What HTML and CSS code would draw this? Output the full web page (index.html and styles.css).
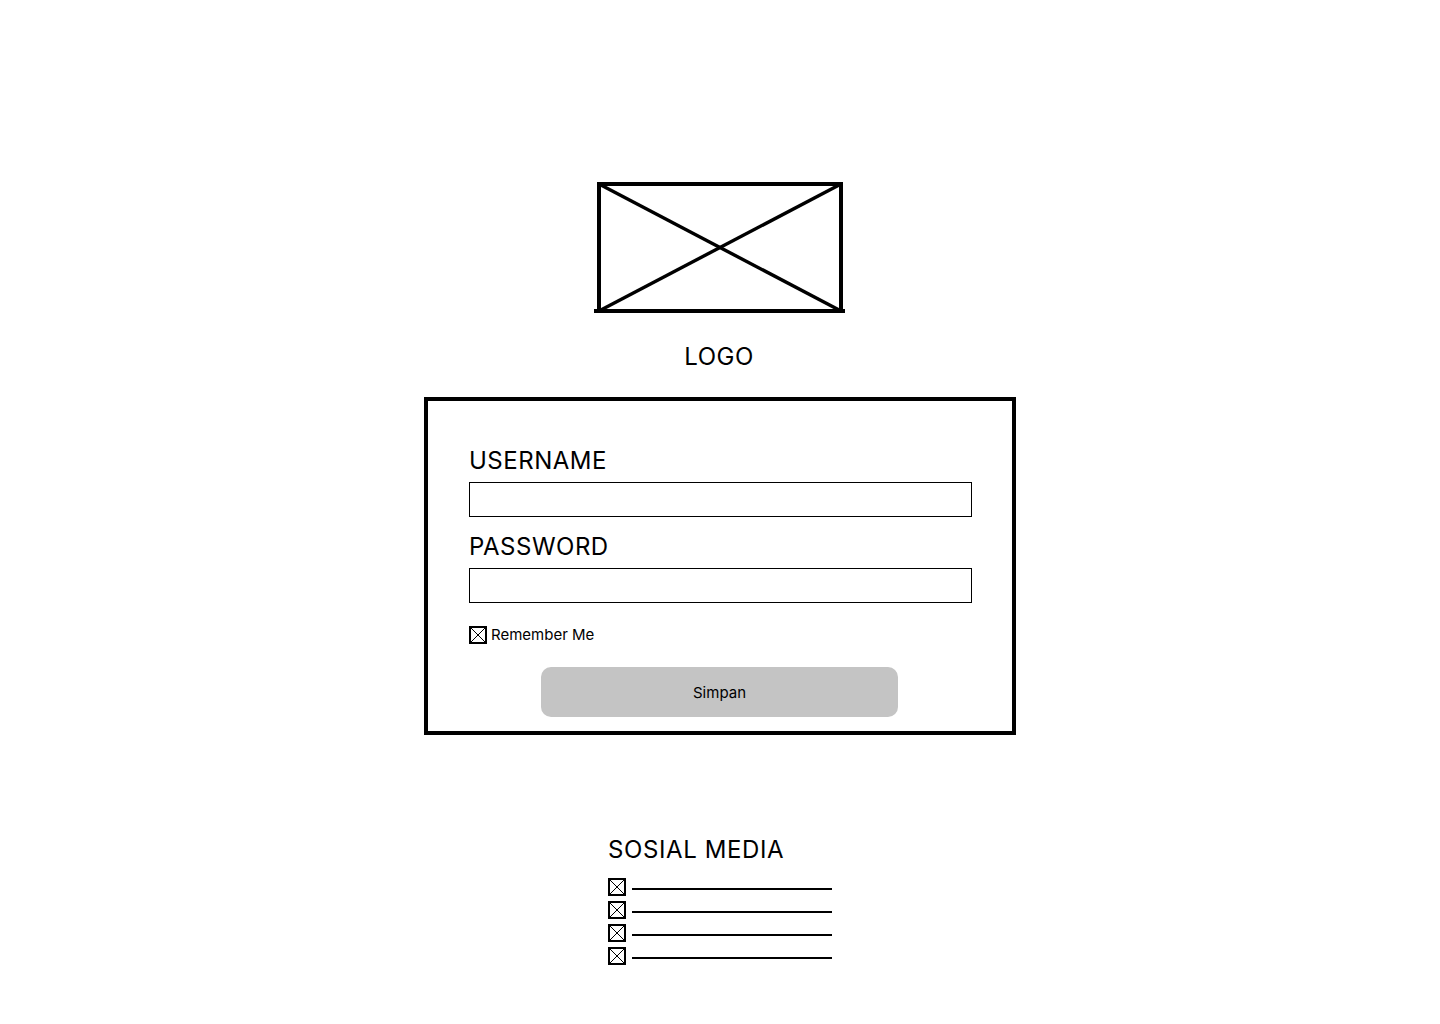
FILE: index.html
```html
<!DOCTYPE html>
<html lang="id">
<head>
<meta charset="utf-8">
<title>Login</title>
<link rel="stylesheet" href="styles.css">
</head>
<body>
<main class="page">
  <div class="logo">
    <svg width="252" height="136" viewBox="0 0 252 136" aria-hidden="true">
      <rect x="5" y="4" width="242" height="127" fill="none" stroke="#000" stroke-width="4"/>
      <line x1="5" y1="4" x2="247" y2="131" stroke="#000" stroke-width="3.4"/>
      <line x1="247" y1="4" x2="5" y2="131" stroke="#000" stroke-width="3.4"/>
      <line x1="0" y1="131" x2="251" y2="131" stroke="#000" stroke-width="4"/>
    </svg>
  </div>
  <div class="logo-text">LOGO</div>

  <form class="card">
    <label class="field-label" for="username">USERNAME</label>
    <input class="field" id="username" type="text">
    <label class="field-label second" for="password">PASSWORD</label>
    <input class="field" id="password" type="password">
    <div class="remember">
      <svg class="xbox" width="18" height="18" viewBox="0 0 18 18" aria-hidden="true">
        <rect x="1" y="1" width="16" height="16" fill="#fff" stroke="#000" stroke-width="2"/>
        <line x1="2" y1="2" x2="16" y2="16" stroke="#000" stroke-width="1"/>
        <line x1="16" y1="2" x2="2" y2="16" stroke="#000" stroke-width="1"/>
      </svg>
      <span>Remember Me</span>
    </div>
    <button class="btn" type="button">Simpan</button>
  </form>

  <section class="social">
    <h2 class="social-title">SOSIAL MEDIA</h2>
    <ul class="social-list">
      <li class="social-row"><svg class="xbox" width="18" height="18" viewBox="0 0 18 18"><rect x="1" y="1" width="16" height="16" fill="#fff" stroke="#000" stroke-width="2"/><line x1="2" y1="2" x2="16" y2="16" stroke="#000" stroke-width="1"/><line x1="16" y1="2" x2="2" y2="16" stroke="#000" stroke-width="1"/></svg><span class="rule"></span></li>
      <li class="social-row"><svg class="xbox" width="18" height="18" viewBox="0 0 18 18"><rect x="1" y="1" width="16" height="16" fill="#fff" stroke="#000" stroke-width="2"/><line x1="2" y1="2" x2="16" y2="16" stroke="#000" stroke-width="1"/><line x1="16" y1="2" x2="2" y2="16" stroke="#000" stroke-width="1"/></svg><span class="rule"></span></li>
      <li class="social-row"><svg class="xbox" width="18" height="18" viewBox="0 0 18 18"><rect x="1" y="1" width="16" height="16" fill="#fff" stroke="#000" stroke-width="2"/><line x1="2" y1="2" x2="16" y2="16" stroke="#000" stroke-width="1"/><line x1="16" y1="2" x2="2" y2="16" stroke="#000" stroke-width="1"/></svg><span class="rule"></span></li>
      <li class="social-row"><svg class="xbox" width="18" height="18" viewBox="0 0 18 18"><rect x="1" y="1" width="16" height="16" fill="#fff" stroke="#000" stroke-width="2"/><line x1="2" y1="2" x2="16" y2="16" stroke="#000" stroke-width="1"/><line x1="16" y1="2" x2="2" y2="16" stroke="#000" stroke-width="1"/></svg><span class="rule"></span></li>
    </ul>
  </section>
</main>
</body>
</html>
```

FILE: styles.css
```css
* { box-sizing: border-box; }
html, body {
  margin: 0;
  padding: 0;
  background: #fff;
}
body {
  font-family: Inter, "Noto Sans", "Liberation Sans", sans-serif;
  color: #000;
}
.page {
  display: flex;
  flex-direction: column;
  align-items: center;
  padding-top: 180px;
  min-height: 1024px;
}
.logo {
  width: 252px;
  height: 136px;
  margin-left: -1px;
}
.logo svg { display: block; }
.logo-text {
  font-size: 24px;
  line-height: 29px;
  letter-spacing: 0.5px;
  margin-top: 26px;
  margin-bottom: 2px;
  margin-left: -2px;
}
.card {
  width: 592px;
  height: 338px;
  margin-top: 24px;
  border: 4px solid #000;
  padding: 45px 40px 0 41px;
  display: flex;
  flex-direction: column;
  align-items: flex-start;
}
.field-label {
  font-size: 24px;
  line-height: 29px;
  letter-spacing: 0.5px;
  display: block;
}
.field-label.second { margin-top: 15px; }
.field {
  display: block;
  width: 503px;
  height: 35px;
  margin-top: 7px;
  border: 1px solid #000;
  border-radius: 0;
  padding: 0 8px;
  background: #fff;
  font: inherit;
  outline: none;
}
.remember {
  display: flex;
  align-items: center;
  gap: 4px;
  margin-top: 23px;
  font-size: 15px;
  line-height: 18px;
}
.xbox { display: block; flex: none; }
.btn {
  align-self: center;
  width: 357px;
  height: 50px;
  margin-top: 23px;
  margin-left: -2px;
  border: none;
  border-radius: 10px;
  background: #c4c4c4;
  font-family: inherit;
  font-size: 15px;
  color: #000;
  padding: 0;
}
.social {
  margin-top: 100px;
  width: 224px;
}
.social-title {
  margin: 0;
  font-weight: 400;
  font-size: 24px;
  line-height: 29px;
  letter-spacing: 0.6px;
}
.social-list {
  list-style: none;
  margin: 14px 0 0;
  padding: 0;
  display: flex;
  flex-direction: column;
  gap: 5px;
}
.social-row {
  display: flex;
  align-items: center;
  gap: 6px;
  height: 18px;
}
.rule {
  display: block;
  width: 200px;
  height: 2px;
  background: #000;
  margin-top: 3px;
}
```
